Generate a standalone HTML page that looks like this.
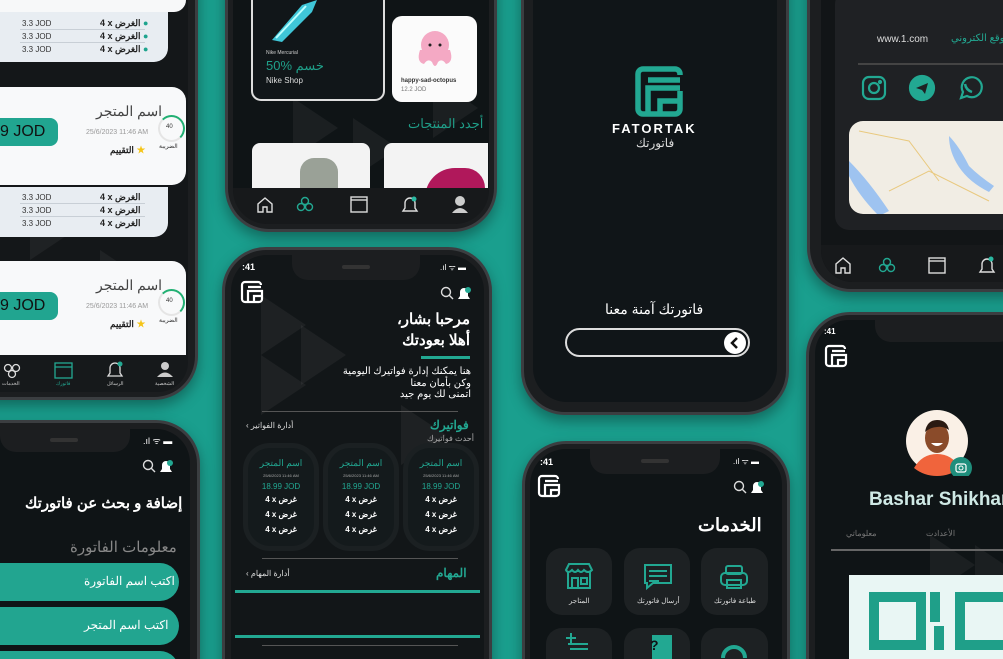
<!DOCTYPE html>
<html style="overflow:hidden;width:1003px;height:659px"><head><meta charset="utf-8">
<style>
*{margin:0;padding:0;box-sizing:border-box}
body{width:1003px;height:659px;overflow:hidden;background:#1a9f8e;position:relative;font-family:"Liberation Sans","Noto Sans CJK SC",sans-serif}
.a{position:absolute}
.frame{position:absolute;background:#1c1e20;border:3px solid #3b3e41;box-shadow:0 6px 14px rgba(0,0,0,.35)}
.scr{position:absolute;background:#0f1416;overflow:hidden}
.t{position:absolute;white-space:nowrap;direction:rtl}
.l{position:absolute;white-space:nowrap}
.tri{position:absolute;width:0;height:0;border-top:30px solid transparent;border-bottom:30px solid transparent;border-left:45px solid rgba(255,255,255,.05)}
</style></head><body>

<!-- Phone A (top-left) -->
<div class="frame" style="left:-60px;top:-60px;width:258px;height:460px;border-radius:44px"></div>
<div class="scr" style="left:-50px;top:-50px;width:238px;height:442px;border-radius:36px;background:#141719">
  <div class="tri" style="left:80px;top:250px"></div><div class="tri" style="left:150px;top:300px"></div>
</div>
<div class="a" style="left:0;top:0;width:186px;height:12px;background:#f7f8f9;border-radius:0 0 16px 0"></div>
<div class="a" style="left:0;top:12px;width:168px;height:50px;background:#e8edf2;border-radius:0 0 14px 0"></div>
<div class="a" style="left:20px;top:29px;width:125px;height:1px;background:#c8cfd6"></div>
<div class="a" style="left:20px;top:42px;width:125px;height:1px;background:#c8cfd6"></div>
<div class="l" style="left:22px;top:17px;font-size:8px;color:#333;line-height:13px">3.3 JOD<br>3.3 JOD<br>3.3 JOD</div>
<div class="l" style="left:100px;top:17px;font-size:9px;color:#222;font-weight:bold;line-height:13px">4 x الغرض <span style="color:#1ea48e">●</span><br>4 x الغرض <span style="color:#1ea48e">●</span><br>4 x الغرض <span style="color:#1ea48e">●</span></div>

<div class="a" style="left:0;top:87px;width:186px;height:98px;background:#f8f9fa;border-radius:0 14px 14px 0"></div>
<div class="a" style="left:0;top:118px;width:58px;height:28px;background:#21a590;border-radius:0 8px 8px 0"></div>
<div class="l" style="left:0;top:123px;font-size:16px;color:#111">9 JOD</div>
<div class="l" style="left:96px;top:103px;font-size:14px;color:#444">اسم المتجر</div>
<div class="l" style="left:86px;top:129px;font-size:7px;color:#999">25/6/2023 11:46 AM</div>
<div class="l" style="left:110px;top:143px;font-size:9px;color:#222;font-weight:bold">التقييم <span style="color:#f5c518">★</span></div>
<div class="a" style="left:158px;top:115px;width:27px;height:27px;border-radius:50%;border:2px solid #e5e5e5;border-right-color:#22b073;border-top-color:#22b073"></div>
<div class="l" style="left:166px;top:124px;font-size:6px;color:#333">40</div>
<div class="l" style="left:159px;top:143px;font-size:6px;color:#333">الضريبة</div>
<div class="a" style="left:0;top:187px;width:168px;height:50px;background:#e8edf2;border-radius:0 0 14px 0"></div>
<div class="a" style="left:20px;top:203px;width:125px;height:1px;background:#c8cfd6"></div>
<div class="a" style="left:20px;top:216px;width:125px;height:1px;background:#c8cfd6"></div>
<div class="l" style="left:22px;top:191px;font-size:8px;color:#333;line-height:13px">3.3 JOD<br>3.3 JOD<br>3.3 JOD</div>
<div class="l" style="left:100px;top:191px;font-size:9px;color:#222;font-weight:bold;line-height:13px">4 x الغرض<br>4 x الغرض<br>4 x الغرض</div>

<div class="a" style="left:0;top:261px;width:186px;height:94px;background:#f8f9fa;border-radius:0 14px 0 0"></div>
<div class="a" style="left:0;top:292px;width:58px;height:28px;background:#21a590;border-radius:0 8px 8px 0"></div>
<div class="l" style="left:0;top:297px;font-size:16px;color:#111">9 JOD</div>
<div class="l" style="left:96px;top:277px;font-size:14px;color:#444">اسم المتجر</div>
<div class="l" style="left:86px;top:303px;font-size:7px;color:#999">25/6/2023 11:46 AM</div>
<div class="l" style="left:110px;top:317px;font-size:9px;color:#222;font-weight:bold">التقييم <span style="color:#f5c518">★</span></div>
<div class="a" style="left:158px;top:289px;width:27px;height:27px;border-radius:50%;border:2px solid #e5e5e5;border-right-color:#22b073;border-top-color:#22b073"></div>
<div class="l" style="left:166px;top:298px;font-size:6px;color:#333">40</div>
<div class="l" style="left:159px;top:317px;font-size:6px;color:#333">الضريبة</div>
<div class="a" style="left:0;top:355px;width:188px;height:37px;background:#16191b;border-radius:0 0 30px 0"></div>
<svg class="a" style="left:0;top:360px" width="190" height="30" viewBox="0 0 190 30" fill="none" stroke="#ddd" stroke-width="1.3">
<circle cx="8" cy="8" r="3.5"/><circle cx="16" cy="8" r="3.5"/><circle cx="12" cy="14" r="3.5"/>
<rect x="55" y="3" width="17" height="15" stroke="#22a892"/><line x1="55" y1="7" x2="72" y2="7" stroke="#22a892"/>
<path d="M108 16 h14 l-2-3 v-5 a5 5 0 0 0 -10 0 v5 z"/><circle cx="120" cy="4" r="2.5" fill="#22a892" stroke="none"/>
<circle cx="165" cy="6" r="4" fill="#ccc" stroke="none"/><path d="M157 17 q8-9 16 0 z" fill="#ccc" stroke="none"/>
</svg>
<div class="l" style="left:2px;top:381px;font-size:5px;color:#ccc">الخدمات</div>
<div class="l" style="left:56px;top:381px;font-size:5px;color:#22a892">فاتورك</div>
<div class="l" style="left:107px;top:381px;font-size:5px;color:#ccc">الرسائل</div>
<div class="l" style="left:155px;top:381px;font-size:5px;color:#ccc">الشخصية</div>

<!-- Phone B -->
<div class="frame" style="left:225px;top:-60px;width:272px;height:292px;border-radius:44px"></div>
<div class="scr" style="left:233px;top:-52px;width:256px;height:276px;border-radius:36px">
  <div class="tri" style="left:60px;top:150px"></div><div class="tri" style="left:120px;top:170px"></div><div class="tri" style="left:200px;top:130px"></div>
</div>
<div class="a" style="left:251px;top:-10px;width:134px;height:111px;border:2px solid #ddd;border-radius:10px;background:#111619"></div>
<svg class="a" style="left:262px;top:0" width="60" height="45" viewBox="0 0 60 45"><path d="M10 40 L40 5 L55 0 L50 12 L20 42 Z" fill="#3fc6d8"/><path d="M14 38 L44 6" stroke="#bff" stroke-width="2"/></svg>
<div class="l" style="left:266px;top:50px;font-size:5px;color:#ccc">Nike Mercurial</div>
<div class="l" style="left:266px;top:58px;font-size:13px;color:#1f9f89">50% خسم</div>
<div class="l" style="left:266px;top:76px;font-size:8px;color:#ddd">Nike Shop</div>
<div class="a" style="left:392px;top:16px;width:85px;height:86px;background:#fbfbfb;border-radius:10px"></div>
<svg class="a" style="left:410px;top:25px" width="50" height="50" viewBox="0 0 50 50"><circle cx="25" cy="20" r="14" fill="#f4a9c4"/><path d="M10 25 q-4 12 4 14 q4 -6 8 -2 q3 8 6 0 q4 -4 8 2 q8 -2 4 -14 z" fill="#f4a9c4"/><circle cx="20" cy="20" r="1.5" fill="#222"/><circle cx="30" cy="20" r="1.5" fill="#222"/></svg>
<div class="l" style="left:401px;top:78px;font-size:6px;color:#333;font-weight:bold">happy-sad-octopus</div>
<div class="l" style="left:401px;top:87px;font-size:6px;color:#777">12.2 JOD</div>
<div class="l" style="left:408px;top:116px;font-size:13px;color:#1f9f89">أجدد المنتجات</div>
<div class="a" style="left:252px;top:143px;width:118px;height:50px;background:#f3f3f3;border-radius:8px 8px 0 0"></div>
<div class="a" style="left:300px;top:158px;width:38px;height:35px;background:#9aa197;border-radius:14px 14px 0 0"></div>
<div class="a" style="left:384px;top:143px;width:104px;height:50px;background:#f3f3f3;border-radius:8px 0 0 0"></div>
<div class="a" style="left:425px;top:168px;width:60px;height:30px;background:#b0185b;border-radius:30px 20px 0 0"></div>
<div class="a" style="left:233px;top:188px;width:256px;height:36px;background:#17191b;border-radius:0 0 34px 34px"></div>
<svg class="a" style="left:250px;top:194px" width="230" height="24" viewBox="0 0 230 24" fill="none" stroke="#ddd" stroke-width="1.4">
<path d="M8 18 v-8 l7-6 l7 6 v8 h-5 v-5 h-4 v5 z"/>
<g stroke="#22a892"><circle cx="55" cy="7" r="3.5"/><circle cx="51" cy="13" r="3.5"/><circle cx="59" cy="13" r="3.5"/></g>
<rect x="101" y="3" width="16" height="15"/><line x1="101" y1="6" x2="117" y2="6"/>
<path d="M153 17 h14 l-2-3 v-5 a5 5 0 0 0 -10 0 v5 z"/><circle cx="164" cy="5" r="2.5" fill="#2ab9a2" stroke="none"/>
<circle cx="210" cy="7" r="5" fill="#ccc" stroke="none"/><path d="M202 19 q8-10 16 0 z" fill="#ccc" stroke="none"/>
</svg>

<!-- Phone C -->
<div class="frame" style="left:521px;top:-60px;width:268px;height:475px;border-radius:44px"></div>
<div class="scr" style="left:533px;top:-50px;width:244px;height:452px;border-radius:34px;background:#101518"></div>
<svg class="a" style="left:634px;top:66px" width="50" height="52" viewBox="0 0 50 52" fill="none" stroke="#22a892" stroke-width="5.5">
<path d="M46 9 V8 a5 5 0 0 0 -5 -5 H9 a5 5 0 0 0 -5 5 V43 a5 5 0 0 0 5 5 H41 a5 5 0 0 0 5 -5 V25"/>
<path d="M14 48 V22 h32"/><path d="M26 48 V35 h19"/><path d="M14 14 h32"/>
</svg>
<div class="l" style="left:612px;top:121px;font-size:13px;color:#fff;font-weight:bold;letter-spacing:2px">FATORTAK</div>
<div class="l" style="left:636px;top:136px;font-size:12px;color:#ddd">فاتورتك</div>
<div class="l" style="left:605px;top:301px;font-size:14px;color:#fff">فاتورتك آمنة معنا</div>
<div class="a" style="left:565px;top:328px;width:185px;height:29px;border:2px solid #ddd;border-radius:15px"></div>
<div class="a" style="left:724px;top:332px;width:22px;height:22px;border-radius:50%;background:#fff"></div>
<svg class="a" style="left:724px;top:332px" width="22" height="22" viewBox="0 0 22 22"><path d="M13 6 L8 11 L13 16" stroke="#111" stroke-width="2.5" fill="none"/></svg>

<!-- Phone D -->
<div class="frame" style="left:807px;top:-60px;width:260px;height:352px;border-radius:44px"></div>
<div class="scr" style="left:821px;top:-50px;width:240px;height:332px;border-radius:32px;background:#121517"></div>
<div class="a" style="left:835px;top:-10px;width:180px;height:240px;background:#1f2124;border-radius:14px"></div>
<div class="l" style="left:877px;top:34px;font-size:10px;color:#ddd">www.1.com</div>
<div class="l" style="left:951px;top:33px;font-size:10px;color:#22a892">موقع الكتروني :</div>
<div class="a" style="left:858px;top:63px;width:150px;height:2px;background:#444"></div>
<svg class="a" style="left:860px;top:73px" width="143" height="30" viewBox="0 0 143 30" fill="none" stroke="#22a892" stroke-width="2.2">
<rect x="3" y="4" width="22" height="22" rx="6"/><circle cx="14" cy="15" r="5"/><circle cx="20" cy="9" r="1" fill="#22a892"/>
<circle cx="62" cy="15" r="12" fill="#22a892"/><path d="M56 15 l12 -5 l-3 11 l-3 -4 z" fill="#1f2124" stroke="none"/>
<path d="M101 25 l2 -6 a10 10 0 1 1 4 4 z"/><path d="M105 11 q1 6 7 8" stroke-width="2.5"/>
</svg>
<div class="a" style="left:849px;top:121px;width:160px;height:93px;background:#f1ede4;border-radius:14px 0 0 14px;overflow:hidden">
  <svg width="160" height="93" viewBox="0 0 160 93"><path d="M0 40 q20 20 40 50 l-10 5 q-20 -20 -30 -40 z" fill="#9ec3f0"/><path d="M100 15 q10 10 20 30 q10 10 25 20 l-5 6 q-20 -10 -30 -25 q-10 -15 -10 -31 z" fill="#9ec3f0"/><path d="M10 10 L60 20 L90 60 M40 70 L80 50 L140 80" stroke="#e9c97e" stroke-width="1" fill="none"/></svg>
</div>
<div class="a" style="left:821px;top:245px;width:200px;height:37px;background:#17191b;border-radius:0 0 0 32px"></div>
<svg class="a" style="left:832px;top:254px" width="171" height="24" viewBox="0 0 171 24" fill="none" stroke="#ddd" stroke-width="1.4">
<path d="M4 19 v-9 l7-6 l7 6 v9 h-5 v-5 h-4 v5 z"/>
<g stroke="#22a892"><circle cx="55" cy="8" r="3.5"/><circle cx="51" cy="14" r="3.5"/><circle cx="59" cy="14" r="3.5"/></g>
<rect x="97" y="4" width="16" height="15"/><line x1="97" y1="7" x2="113" y2="7"/>
<path d="M148 18 h14 l-2-3 v-5 a5 5 0 0 0 -10 0 v5 z"/><circle cx="159" cy="5" r="2.5" fill="#2ab9a2" stroke="none"/>
</svg>

<!-- Phone E -->
<div class="frame" style="left:-60px;top:420px;width:260px;height:300px;border-radius:44px"></div>
<div class="scr" style="left:-50px;top:429px;width:240px;height:280px;border-radius:34px"></div>
<div class="a" style="left:0;top:428px;width:130px;height:24px;background:#1c1e20;border-radius:0 0 16px 16px"></div>
<div class="a" style="left:50px;top:438px;width:28px;height:4px;background:#333;border-radius:2px"></div>
<div class="l" style="left:143px;top:434px;font-size:9px;color:#fff">.ıl ᯤ ▬</div>
<svg class="a" style="left:141px;top:458px" width="40" height="18" viewBox="0 0 40 18"><circle cx="7" cy="7" r="4.5" stroke="#ddd" stroke-width="1.4" fill="none"/><path d="M10 10 l4 4" stroke="#ddd" stroke-width="1.4"/><path d="M19 14 h12 l-2-3 v-4 a4 4 0 0 0 -8 0 v4 z" fill="#fff"/><circle cx="29" cy="5" r="3" fill="#22a892"/></svg>
<div class="l" style="left:25px;top:494px;font-size:15px;color:#fff;font-weight:bold">إضافة و بحث عن فاتورتك</div>
<div class="l" style="left:70px;top:538px;font-size:15px;color:#888">معلومات الفاتورة</div>
<div class="a" style="left:-20px;top:563px;width:199px;height:38px;background:#22a590;border-radius:19px"></div>
<div class="l" style="left:84px;top:574px;font-size:12px;color:#fff">اكتب اسم الفاتورة</div>
<div class="a" style="left:-20px;top:607px;width:199px;height:38px;background:#22a590;border-radius:19px"></div>
<div class="l" style="left:84px;top:618px;font-size:12px;color:#fff">اكتب اسم المتجر</div>
<div class="a" style="left:-20px;top:651px;width:199px;height:38px;background:#22a590;border-radius:19px"></div>

<!-- Phone F -->
<div class="frame" style="left:222px;top:247px;width:270px;height:470px;border-radius:44px"></div>
<div class="scr" style="left:231px;top:255px;width:253px;height:460px;border-radius:36px;background:#121618">
  <div class="tri" style="left:30px;top:40px"></div><div class="tri" style="left:70px;top:70px"></div><div class="tri" style="left:30px;top:100px"></div><div class="tri" style="left:170px;top:150px"></div><div class="tri" style="left:110px;top:220px"></div><div class="tri" style="left:200px;top:180px"></div>
</div>
<div class="a" style="left:292px;top:255px;width:128px;height:25px;background:#1c1e20;border-radius:0 0 16px 16px"></div>
<div class="a" style="left:342px;top:265px;width:28px;height:4px;background:#333;border-radius:2px"></div>
<div class="l" style="left:242px;top:262px;font-size:9px;color:#fff;font-weight:bold">:41</div>
<div class="l" style="left:440px;top:262px;font-size:8px;color:#fff">.ıl ᯤ ▬</div>
<svg class="a" style="left:240px;top:280px" width="24" height="24" viewBox="0 0 24 24" fill="none" stroke="#fff" stroke-width="2.2"><path d="M21 5 a3 3 0 0 0 -3 -3 H5 a3 3 0 0 0 -3 3 V19 a3 3 0 0 0 3 3 H19 a3 3 0 0 0 3 -3 V11 H8 V22 M14 22 V16 H21 M8 7 H21"/></svg>
<svg class="a" style="left:439px;top:285px" width="40" height="18" viewBox="0 0 40 18"><circle cx="7" cy="7" r="4.5" stroke="#ddd" stroke-width="1.4" fill="none"/><path d="M10 10 l4 4" stroke="#ddd" stroke-width="1.4"/><path d="M19 14 h12 l-2-3 v-4 a4 4 0 0 0 -8 0 v4 z" fill="#fff"/><circle cx="29" cy="5" r="3" fill="#22a892"/></svg>
<div class="t" style="right:533px;top:310px;font-size:15px;color:#fff;font-weight:bold">مرحبا بشار،</div>
<div class="t" style="right:533px;top:331px;font-size:15px;color:#fff;font-weight:bold">أهلا بعودتك</div>
<div class="a" style="left:421px;top:356px;width:49px;height:3px;background:#22a892"></div>
<div class="t" style="right:532px;top:366px;font-size:10px;color:#fff;line-height:11.5px;text-align:right">هنا يمكنك إدارة فواتيرك اليومية<br>وكن بأمان معنا<br>اتمنى لك يوم جيد</div>
<div class="a" style="left:262px;top:411px;width:196px;height:1px;background:#555"></div>
<div class="l" style="left:430px;top:418px;font-size:12px;color:#22a892;font-weight:bold">فواتيرك</div>
<div class="l" style="left:427px;top:434px;font-size:8px;color:#aaa">أحدث فواتيرك</div>
<div class="l" style="left:246px;top:421px;font-size:8px;color:#ddd">‹ أدارة الفواتير</div>
<div class="a" style="left:248px;top:448px;width:66px;height:98px;border-radius:22px;background:#141a1c;box-shadow:0 0 0 5px #1b2022"></div>
<div class="a" style="left:328px;top:448px;width:66px;height:98px;border-radius:22px;background:#141a1c;box-shadow:0 0 0 5px #1b2022"></div>
<div class="a" style="left:408px;top:448px;width:66px;height:98px;border-radius:22px;background:#141a1c;box-shadow:0 0 0 5px #1b2022"></div>
<div class="l" style="left:259px;top:458px;width:44px;text-align:center;font-size:9px;color:#22a892;line-height:11px">اسم المتجر<br><span style="font-size:4px;color:#aaa">25/6/2023 11:46 AM</span><br><span style="font-size:8px">18.99 JOD</span><br><span style="color:#fff;font-size:8px;line-height:15px;font-weight:bold">4 x غرض<br>4 x غرض<br>4 x غرض</span></div>
<div class="l" style="left:339px;top:458px;width:44px;text-align:center;font-size:9px;color:#22a892;line-height:11px">اسم المتجر<br><span style="font-size:4px;color:#aaa">25/6/2023 11:46 AM</span><br><span style="font-size:8px">18.99 JOD</span><br><span style="color:#fff;font-size:8px;line-height:15px;font-weight:bold">4 x غرض<br>4 x غرض<br>4 x غرض</span></div>
<div class="l" style="left:419px;top:458px;width:44px;text-align:center;font-size:9px;color:#22a892;line-height:11px">اسم المتجر<br><span style="font-size:4px;color:#aaa">25/6/2023 11:46 AM</span><br><span style="font-size:8px">18.99 JOD</span><br><span style="color:#fff;font-size:8px;line-height:15px;font-weight:bold">4 x غرض<br>4 x غرض<br>4 x غرض</span></div>
<div class="a" style="left:262px;top:558px;width:196px;height:1px;background:#555"></div>
<div class="l" style="left:436px;top:566px;font-size:12px;color:#22a892;font-weight:bold">المهام</div>
<div class="l" style="left:246px;top:569px;font-size:8px;color:#ddd">‹ أدارة المهام</div>
<div class="a" style="left:235px;top:590px;width:245px;height:3px;background:#22a892"></div>
<div class="a" style="left:235px;top:635px;width:245px;height:3px;background:#22a892"></div>
<div class="a" style="left:262px;top:645px;width:196px;height:1px;background:#555"></div>

<!-- Phone G -->
<div class="frame" style="left:522px;top:441px;width:268px;height:280px;border-radius:44px"></div>
<div class="scr" style="left:530px;top:449px;width:252px;height:270px;border-radius:36px"></div>
<div class="a" style="left:590px;top:449px;width:130px;height:25px;background:#1c1e20;border-radius:0 0 16px 16px"></div>
<div class="a" style="left:641px;top:459px;width:28px;height:4px;background:#333;border-radius:2px"></div>
<div class="l" style="left:540px;top:457px;font-size:9px;color:#fff;font-weight:bold">:41</div>
<div class="l" style="left:733px;top:456px;font-size:8px;color:#fff">.ıl ᯤ ▬</div>
<svg class="a" style="left:537px;top:474px" width="24" height="24" viewBox="0 0 24 24" fill="none" stroke="#fff" stroke-width="2.2"><path d="M21 5 a3 3 0 0 0 -3 -3 H5 a3 3 0 0 0 -3 3 V19 a3 3 0 0 0 3 3 H19 a3 3 0 0 0 3 -3 V11 H8 V22 M14 22 V16 H21 M8 7 H21"/></svg>
<svg class="a" style="left:732px;top:479px" width="40" height="18" viewBox="0 0 40 18"><circle cx="7" cy="7" r="4.5" stroke="#ddd" stroke-width="1.4" fill="none"/><path d="M10 10 l4 4" stroke="#ddd" stroke-width="1.4"/><path d="M19 14 h12 l-2-3 v-4 a4 4 0 0 0 -8 0 v4 z" fill="#fff"/><circle cx="29" cy="5" r="3" fill="#22a892"/></svg>
<div class="l" style="left:698px;top:515px;font-size:18px;color:#fff;font-weight:bold">الخدمات</div>
<div class="a" style="left:546px;top:548px;width:66px;height:67px;background:#1d2123;border-radius:16px"></div>
<div class="a" style="left:624px;top:548px;width:66px;height:67px;background:#1d2123;border-radius:16px"></div>
<div class="a" style="left:701px;top:548px;width:67px;height:67px;background:#1d2123;border-radius:16px"></div>
<div class="a" style="left:546px;top:628px;width:66px;height:67px;background:#1d2123;border-radius:16px"></div>
<div class="a" style="left:624px;top:628px;width:66px;height:67px;background:#1d2123;border-radius:16px"></div>
<div class="a" style="left:701px;top:628px;width:67px;height:67px;background:#1d2123;border-radius:16px"></div>
<svg class="a" style="left:546px;top:548px" width="222" height="111" viewBox="0 0 222 111" fill="none" stroke="#22a892" stroke-width="2">
<path d="M20 22 l3-6 h20 l3 6 q-4 4 -8 0 q-3 4 -6 0 q-3 4 -6 0 q-4 4 -6 0 z"/><path d="M22 24 v16 h22 v-16"/><rect x="26" y="30" width="6" height="10"/><rect x="35" y="30" width="6" height="6"/>
<path d="M99 17 h26 v18 h-18 l-6 5 v-5 h-2 z"/><path d="M103 23 h18 M103 28 h18 M103 33 h10"/>
<rect x="180" y="18" width="16" height="8" rx="2"/><rect x="175" y="25" width="26" height="12" rx="4"/><rect x="181" y="32" width="14" height="8"/>
<path d="M20 90 h10 M25 85 v10 M22 96 h20 M24 101 h18"/>
<rect x="107" y="88" width="18" height="23" fill="#22a892"/>
<path d="M177 110 a11 11 0 0 1 22 0" stroke-width="4"/>
</svg>
<div class="l" style="left:569px;top:597px;font-size:7px;color:#ddd">المتاجر</div>
<div class="l" style="left:637px;top:597px;font-size:7px;color:#ddd">أرسال فاتورتك</div>
<div class="l" style="left:714px;top:597px;font-size:7px;color:#ddd">طباعة فاتورتك</div>
<div class="l" style="left:650px;top:637px;font-size:14px;color:#0f1416;font-weight:bold">?</div>

<!-- Phone H -->
<div class="frame" style="left:806px;top:312px;width:260px;height:410px;border-radius:44px"></div>
<div class="scr" style="left:815px;top:320px;width:245px;height:400px;border-radius:34px">
  <div class="tri" style="left:115px;top:215px"></div><div class="tri" style="left:160px;top:225px"></div>
</div>
<div class="a" style="left:875px;top:320px;width:140px;height:22px;background:#1c1e20;border-radius:0 0 16px 16px"></div>
<div class="l" style="left:824px;top:327px;font-size:8px;color:#fff;font-weight:bold">:41</div>
<svg class="a" style="left:824px;top:344px" width="24" height="24" viewBox="0 0 24 24" fill="none" stroke="#fff" stroke-width="2.2"><path d="M21 5 a3 3 0 0 0 -3 -3 H5 a3 3 0 0 0 -3 3 V19 a3 3 0 0 0 3 3 H19 a3 3 0 0 0 3 -3 V11 H8 V22 M14 22 V16 H21 M8 7 H21"/></svg>
<svg class="a" style="left:906px;top:410px" width="66" height="66" viewBox="0 0 66 66">
<circle cx="31" cy="31" r="31" fill="#faf0e6"/>
<path d="M8 58 q8 -14 23 -14 q15 0 23 14 q-10 8 -23 8 q-13 0 -23 -8 z" fill="#f0643c"/>
<ellipse cx="31" cy="28" rx="12" ry="15" fill="#8a4b2a"/><path d="M19 22 q2 -12 12 -12 q10 0 12 10 q-6 -4 -12 -3 q-6 0 -12 5 z" fill="#2a1a12"/>
<path d="M25 33 q6 6 12 0 z" fill="#fff"/>
<circle cx="55" cy="58" r="11" fill="#1f8e7c"/><rect x="50" y="54" width="10" height="8" rx="2" fill="none" stroke="#fff" stroke-width="1.2"/><circle cx="55" cy="58" r="2" fill="none" stroke="#fff" stroke-width="1"/>
</svg>
<div class="l" style="left:869px;top:489px;font-size:19px;color:#cfe9e5;font-weight:bold">Bashar Shikhani</div>
<div class="l" style="left:846px;top:529px;font-size:8px;color:#777">معلوماتي</div>
<div class="l" style="left:926px;top:529px;font-size:8px;color:#777">الأعدادت</div>
<div class="a" style="left:831px;top:549px;width:180px;height:2px;background:#666"></div>
<div class="a" style="left:849px;top:575px;width:160px;height:90px;background:#e9f6f4"></div>
<div class="a" style="left:869px;top:592px;width:57px;height:58px;border:10px solid #1f9f89"></div>
<div class="a" style="left:930px;top:592px;width:10px;height:30px;background:#1f9f89"></div>
<div class="a" style="left:934px;top:626px;width:10px;height:24px;background:#1f9f89"></div>
<div class="a" style="left:955px;top:592px;width:60px;height:58px;border:10px solid #1f9f89"></div>
</body></html>
